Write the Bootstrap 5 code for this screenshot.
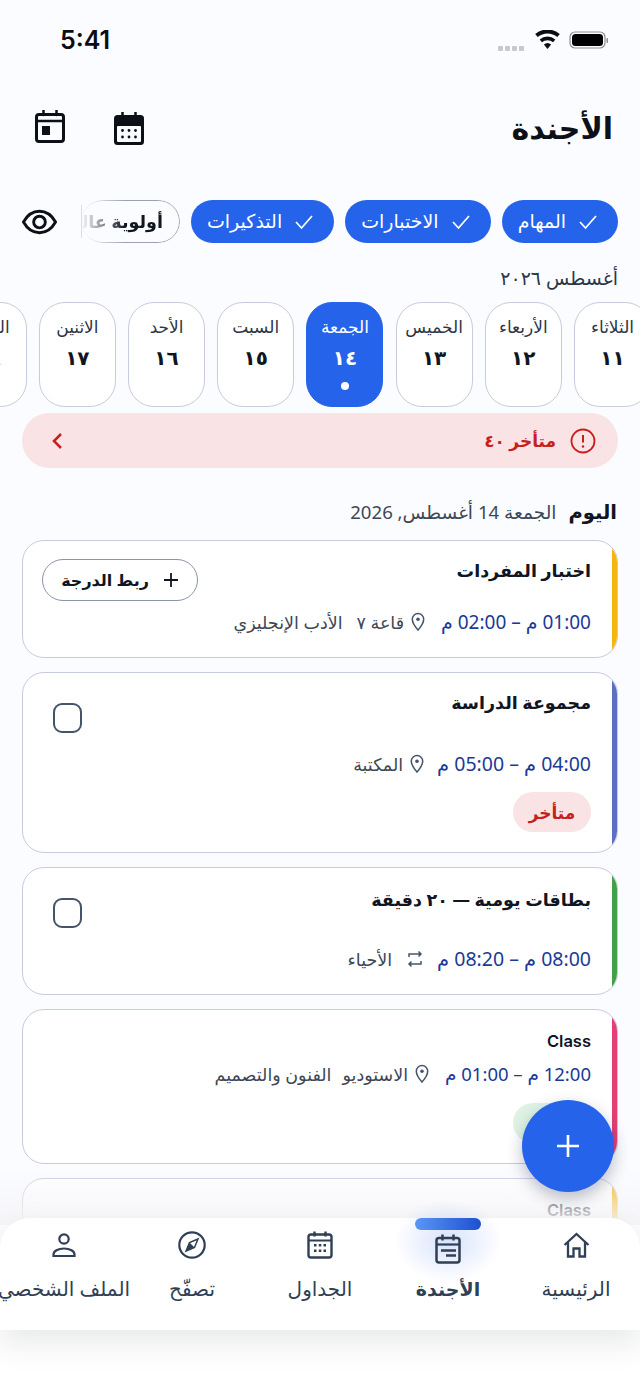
<!DOCTYPE html>
<html lang="ar" dir="rtl">
<head>
<meta charset="UTF-8">
<meta name="viewport" content="width=device-width, initial-scale=1.0">
<title>الأجندة</title>
<link href="https://cdn.jsdelivr.net/npm/bootstrap@5.3.0/dist/css/bootstrap.min.css" rel="stylesheet">
<style>
  html, body { height: 1385px; overflow: hidden; }
  body { background: #fbfcff; font-family: "Noto Sans", "DejaVu Sans", sans-serif; color: #10151f; }
  .phone { position: relative; height: 1385px; overflow: hidden; }

  .status-row { height: 82px; padding: 24px 31px 0 60px; direction: ltr; }
  .clock { font: 600 25px/32px Inter, sans-serif; color: #0b0d12; }
  .signal-row { gap: 2px; margin-top: 16px; margin-right: 2px; }
  .signal-dot { width: 5px; height: 5px; border-radius: 1px; background: #c9c9cc; }

  .head-row { height: 92px; padding: 0 27px 0 35px; }
  .page-title { font-size: 30px; font-weight: 700; margin: 0; color: #0d1117; }
  .head-icons { gap: 49px; }
  .ico-up { margin-top: -4px; }

  .filter-row { padding: 26px 22px 0 22px; height: 69px; }
  .chip-pill { height: 43px; border-radius: 22px; font-size: 19px; font-weight: 500; background: #2563eb; color: #fff; padding: 0 20px 0 16px; gap: 12px; white-space: nowrap; flex-shrink: 0; }
  .chip-wrap { position: relative; flex-shrink: 0; }
  .chip-wrap::after { content: ""; position: absolute; left: 0; top: 5px; bottom: 5px; width: 1.500px; background: #dcdde3; }
  .chip-fade { width: 99px; height: 43px; border: 1.5px solid #9aa3b5; border-radius: 22px; overflow: hidden; white-space: nowrap; font-size: 17.500px; font-weight: 600; padding: 0 16px 0 0; line-height: 40px; -webkit-mask-image: linear-gradient(to left, #000 55%, transparent 100%); mask-image: linear-gradient(to left, #000 55%, transparent 100%); }

  .month-label { padding: 22px 22px 0 0; font-size: 19px; font-weight: 500; color: #2b3648; height: 59px; line-height: 26px; }

  .day-strip { gap: 12.200px; margin-right: -11px; height: 105px; }
  .day-tile { width: 77px; height: 105px; flex-shrink: 0; border: 1.5px solid #c8cbdc; border-radius: 26px; background: #fff; text-align: center; padding-top: 13px; }
  .day-name { font-size: 17px; font-weight: 500; line-height: 22px; color: #2b3648; white-space: nowrap; }
  .day-num { font-size: 20px; font-weight: 700; line-height: 28px; margin-top: 6px; color: #10151f; }
  .day-tile.is-today { background: #2563eb; border-color: #2563eb; }
  .day-tile.is-today .day-name, .day-tile.is-today .day-num { color: #fff; }
  .today-dot { width: 8px; height: 8px; border-radius: 50%; background: #fff; margin: 10px auto 0; }

  .late-bar { margin: 6px 22px 0; height: 55px; border-radius: 28px; background: #f9e3e4; color: #c81e1e; padding: 0 22px 0 28px; font-size: 17px; font-weight: 700; }
  .late-label { gap: 14px; }

  .date-row { padding: 16px 23px 0 0; height: 72px; gap: 12px; }
  .date-today { font-size: 19.500px; font-weight: 700; }
  .date-full { font-size: 18.600px; color: #3d4756; }

  .agenda-card { margin: 0 22px 14px; border: 1.5px solid #c8cbdc; border-radius: 22px; background: #fff; overflow: hidden; flex-direction: row; }
  .side-stripe { width: 5px; flex-shrink: 0; }
  .card-inner { flex-grow: 1; padding: 0 21px 0 19px; }
  .card-title-text { font-size: 17.500px; line-height: 22px; font-weight: 700; color: #10151f; }
  .h-cards .card-title-text { margin-top: 2px; }
  .meta-row { gap: 16px; font-size: 17.500px; color: #3d4756; white-space: nowrap; }
  .meta-row.is-tight { gap: 13px; }
  .time-text { font-size: 19px; color: #1a3a96; }
  .is-tight .time-text { font-size: 19.500px; }
  .class-meta .time-text { font-size: 18.500px; }
  .meta-place { gap: 7px; }
  .gap-wide { gap: 14px; }
  .place-note { margin-right: -2px; }
  .class-note { margin-right: -5px; }
  .link-grade { width: 156px; height: 42px; border: 1.5px solid #8b95aa; border-radius: 21px; font-size: 16px; font-weight: 700; background: #fff; color: #10151f; padding: 0; gap: 14px; }
  .tick-box { width: 29px; height: 30px; border: 2.5px solid #46546b; border-radius: 9px; margin-left: 11px; margin-top: 12px; }
  .state-tag { height: 40px; width: 78px; border-radius: 20px; font-size: 17px; font-weight: 600; }
  .tag-late { background: #f9e3e4; color: #c81e1e; }
  .tag-green { background: #dff3e5; }

  .h-exam { height: 118px; }
  .h-study { height: 181px; }
  .h-cards { height: 128px; }
  .h-class { height: 155px; }
  .h-next { height: 120px; }
  .class-title { font-size: 16.500px; line-height: 25px; font-weight: 600; font-family: Inter, "Noto Sans", sans-serif; padding-top: 19px; }

  .fab-add { position: absolute; left: 522px; top: 1100px; width: 92px; height: 92px; border-radius: 50%; background: #2563eb; box-shadow: 0 6px 16px rgba(30, 40, 70, .3); border: 0; padding: 0; }
  .fade-veil { position: absolute; left: 0; right: 0; top: 1165px; height: 60px; background: linear-gradient(to bottom, rgba(250, 250, 252, 0), rgba(245, 245, 248, .95)); }

  .tab-bar { position: absolute; left: 0; right: 0; top: 1218px; height: 112px; background: #fff; border-radius: 30px 30px 0 0; box-shadow: 0 14px 30px rgba(40, 45, 60, .1); }
  .tab-cell { width: 128px; flex-shrink: 0; text-align: center; position: relative; color: #2f3f55; font-size: 20px; white-space: nowrap; }
  .tab-ico { height: 54px; display: flex; align-items: center; justify-content: center; }
  .tab-name { line-height: 28px; margin-top: 3px; display: block; margin-inline: -20px; }
  .tab-cell.is-active { font-weight: 700; font-size: 19px; }
  .tab-pip { position: absolute; top: 0; left: 31px; width: 66px; height: 12px; border-radius: 6px; background: linear-gradient(to right, #5b96f5, #1d50d0); }
  .tab-glow { position: absolute; top: -20px; left: 8px; width: 112px; height: 86px; background: radial-gradient(ellipse at center, rgba(60, 110, 240, .2), rgba(60, 110, 240, 0) 68%); }
  .ico-drop { padding-top: 8px; }
  .page-foot { position: absolute; left: 0; right: 0; top: 1330px; height: 55px; background: #fff; }
</style>
</head>
<body>
<div class="phone">

  <div class="status-row d-flex justify-content-between">
    <span class="clock">5:41</span>
    <div class="d-flex align-items-center gap-2" style="height:32px">
      <div class="signal-row d-flex"><span class="signal-dot"></span><span class="signal-dot"></span><span class="signal-dot"></span><span class="signal-dot"></span></div>
      <svg width="27" height="20" viewBox="0 0 27 20"><path d="M13.5 19l-3.6-4.4a5.6 5.6 0 0 1 7.2 0zM7.9 12.2L5.700 9.500a12 12 0 0 1 15.600 0l-2.200 2.700a8.600 8.600 0 0 0-11.200 0zM3.700 7L1.200 4a19 19 0 0 1 24.600 0l-2.500 3a15.200 15.200 0 0 0-19.600 0z" fill="#0b0d12"/></svg>
      <svg width="40" height="20" viewBox="0 0 40 20"><rect x="1" y="2" width="35" height="16" rx="5" fill="none" stroke="#8d8d90" stroke-width="1.200"/><rect x="3" y="4" width="31" height="12" rx="3.500" fill="#000"/><rect x="37.500" y="8" width="1.500" height="5" rx=".7" fill="#8d8d90"/></svg>
    </div>
  </div>

  <div class="head-row d-flex justify-content-between align-items-center">
    <h1 class="page-title">الأجندة</h1>
    <div class="head-icons d-flex align-items-center">
      <svg width="30" height="33" viewBox="0 0 30 33"><rect x="0" y="3" width="30" height="30" rx="3.500" fill="#0d1117"/><path d="M8.500 0v5M21.500 0v5" stroke="#0d1117" stroke-width="2.500" stroke-linecap="round"/><rect x="3" y="14" width="24" height="16" rx="1" fill="#fbfcff"/><g fill="#0d1117"><circle cx="8.500" cy="18.500" r="1.400"/><circle cx="15" cy="18.500" r="1.400"/><circle cx="21.500" cy="18.500" r="1.400"/><circle cx="8.500" cy="25" r="1.400"/><circle cx="15" cy="25" r="1.400"/><circle cx="21.500" cy="25" r="1.400"/></g></svg>
      <svg class="ico-up" width="30" height="33" viewBox="0 0 30 33"><rect x="1.500" y="4.500" width="27" height="27" rx="2.500" fill="none" stroke="#0d1117" stroke-width="3"/><path d="M8.500 0v5M21.500 0v5" stroke="#0d1117" stroke-width="2.500" stroke-linecap="round"/><path d="M2 11h26" stroke="#0d1117" stroke-width="2.500"/><rect x="7" y="16" width="8" height="9" fill="#0d1117"/></svg>
    </div>
  </div>

  <div class="filter-row d-flex align-items-start justify-content-between">
    <div class="d-flex" style="gap:11px">
      <div class="chip-pill d-flex align-items-center"><svg width="20" height="16" viewBox="0 0 20 16"><path d="M2 8l5.500 6L18 2" fill="none" stroke="#fff" stroke-width="1.800"/></svg><span>المهام</span></div>
      <div class="chip-pill d-flex align-items-center"><svg width="20" height="16" viewBox="0 0 20 16"><path d="M2 8l5.500 6L18 2" fill="none" stroke="#fff" stroke-width="1.800"/></svg><span>الاختبارات</span></div>
      <div class="chip-pill d-flex align-items-center"><svg width="20" height="16" viewBox="0 0 20 16"><path d="M2 8l5.500 6L18 2" fill="none" stroke="#fff" stroke-width="1.800"/></svg><span>التذكيرات</span></div>
      <div class="chip-wrap"><div class="chip-fade">أولوية عالية</div></div>
    </div>
    <svg class="mt-1" width="35" height="36" viewBox="0 0 36 36"><path d="M1.500 18C6 10 11.500 7 18 7s12 3 16.500 11C30 26 24.500 29 18 29S6 26 1.500 18z" fill="none" stroke="#0d1117" stroke-width="3"/><circle cx="18" cy="18" r="6" fill="none" stroke="#0d1117" stroke-width="3"/></svg>
  </div>

  <div class="month-label">أغسطس ٢٠٢٦</div>

  <div class="day-strip d-flex">
    <div class="day-tile"><div class="day-name">الثلاثاء</div><div class="day-num">١١</div></div>
    <div class="day-tile"><div class="day-name">الأربعاء</div><div class="day-num">١٢</div></div>
    <div class="day-tile"><div class="day-name">الخميس</div><div class="day-num">١٣</div></div>
    <div class="day-tile is-today"><div class="day-name">الجمعة</div><div class="day-num">١٤</div><div class="today-dot"></div></div>
    <div class="day-tile"><div class="day-name">السبت</div><div class="day-num">١٥</div></div>
    <div class="day-tile"><div class="day-name">الأحد</div><div class="day-num">١٦</div></div>
    <div class="day-tile"><div class="day-name">الاثنين</div><div class="day-num">١٧</div></div>
    <div class="day-tile"><div class="day-name">الثلاثاء</div><div class="day-num">١٨</div></div>
  </div>

  <div class="late-bar d-flex align-items-center justify-content-between">
    <div class="late-label d-flex align-items-center">
      <svg width="26" height="26" viewBox="0 0 26 26"><circle cx="13" cy="13" r="11.500" fill="none" stroke="#c81e1e" stroke-width="1.800"/><path d="M13 7v7.500" stroke="#c81e1e" stroke-width="2"/><circle cx="13" cy="18.500" r="1.200" fill="#c81e1e"/></svg>
      <span>متأخر ٤٠</span>
    </div>
    <svg width="14" height="18" viewBox="0 0 14 18"><path d="M11 2L4 9l7 7" fill="none" stroke="#c81e1e" stroke-width="2.500"/></svg>
  </div>

  <div class="date-row d-flex align-items-center">
    <span class="date-today">اليوم</span>
    <span class="date-full">الجمعة 14 أغسطس, 2026</span>
  </div>

  <div class="card agenda-card h-exam">
    <div class="side-stripe" style="background:#f5b50e"></div>
    <div class="card-inner">
      <div class="d-flex justify-content-between align-items-start" style="padding-top:18px">
        <span class="card-title-text">اختبار المفردات</span>
        <button class="btn link-grade d-flex align-items-center justify-content-center" type="button"><svg width="16" height="16" viewBox="0 0 16 16"><path d="M8 1v14M1 8h14" stroke="#10151f" stroke-width="1.800"/></svg>ربط الدرجة</button>
      </div>
      <div class="meta-row d-flex align-items-center" style="margin-top:7px">
        <span class="time-text">01:00 م – 02:00 م</span>
        <span class="meta-place d-flex align-items-center"><svg width="14" height="20" viewBox="0 0 14 20"><path d="M7 1.500a5.700 5.700 0 0 1 5.700 5.700C12.700 11.500 7 18 7 18S1.300 11.500 1.300 7.200A5.700 5.700 0 0 1 7 1.500z" fill="none" stroke="#46546b" stroke-width="1.500"/><circle cx="7" cy="7.200" r="1.800" fill="#46546b"/></svg>قاعة ٧</span>
        <span class="place-note">الأدب الإنجليزي</span>
      </div>
    </div>
  </div>

  <div class="card agenda-card h-study">
    <div class="side-stripe" style="background:#5c6fc4"></div>
    <div class="card-inner">
      <div class="d-flex justify-content-between align-items-start" style="padding-top:18px">
        <span class="card-title-text">مجموعة الدراسة</span>
        <span class="tick-box"></span>
      </div>
      <div class="meta-row is-tight d-flex align-items-center" style="margin-top:16px">
        <span class="time-text">04:00 م – 05:00 م</span>
        <span class="meta-place d-flex align-items-center"><svg width="14" height="20" viewBox="0 0 14 20"><path d="M7 1.500a5.700 5.700 0 0 1 5.700 5.700C12.700 11.500 7 18 7 18S1.300 11.500 1.300 7.200A5.700 5.700 0 0 1 7 1.500z" fill="none" stroke="#46546b" stroke-width="1.500"/><circle cx="7" cy="7.200" r="1.800" fill="#46546b"/></svg>المكتبة</span>
      </div>
      <div class="state-tag tag-late d-flex align-items-center justify-content-center" style="margin-top:14px">متأخر</div>
    </div>
  </div>

  <div class="card agenda-card h-cards">
    <div class="side-stripe" style="background:#43a04a"></div>
    <div class="card-inner">
      <div class="d-flex justify-content-between align-items-start" style="padding-top:18px">
        <span class="card-title-text">بطاقات يومية — ٢٠ دقيقة</span>
        <span class="tick-box"></span>
      </div>
      <div class="meta-row is-tight d-flex align-items-center" style="margin-top:16px">
        <span class="time-text">08:00 م – 08:20 م</span>
        <span class="meta-place gap-wide d-flex align-items-center"><svg width="18" height="18" viewBox="0 0 18 18"><path d="M3 7V4h12M12.500 1.500L15 4l-2.500 2.500M15 11v3H3M5.500 11.500L3 14l2.500 2.500" fill="none" stroke="#46546b" stroke-width="1.500"/></svg>الأحياء</span>
      </div>
    </div>
  </div>

  <div class="card agenda-card h-class">
    <div class="side-stripe" style="background:#e53e74"></div>
    <div class="card-inner">
      <div class="class-title">Class</div>
      <div class="meta-row class-meta d-flex align-items-center" style="margin-top:6px">
        <span class="time-text">12:00 م – 01:00 م</span>
        <span class="meta-place d-flex align-items-center"><svg width="14" height="20" viewBox="0 0 14 20"><path d="M7 1.500a5.700 5.700 0 0 1 5.700 5.700C12.700 11.500 7 18 7 18S1.300 11.500 1.300 7.200A5.700 5.700 0 0 1 7 1.500z" fill="none" stroke="#46546b" stroke-width="1.500"/><circle cx="7" cy="7.200" r="1.800" fill="#46546b"/></svg>الاستوديو</span>
        <span class="class-note">الفنون والتصميم</span>
      </div>
      <div class="state-tag tag-green" style="margin-top:15px"></div>
    </div>
  </div>

  <div class="card agenda-card h-next">
    <div class="side-stripe" style="background:#f5b50e"></div>
    <div class="card-inner">
      <div class="class-title">Class</div>
    </div>
  </div>

  <div class="fade-veil"></div>

  <button class="fab-add d-flex align-items-center justify-content-center" type="button" aria-label="إضافة"><svg width="26" height="26" viewBox="0 0 26 26"><path d="M13 2v22M2 13h22" stroke="#fff" stroke-width="2.600"/></svg></button>

  <div class="page-foot"></div>
  <nav class="tab-bar d-flex">
    <div class="tab-cell"><div class="tab-ico"><svg width="27" height="26" viewBox="0 0 27 26"><path d="M1.500 13L13.500 2l12 11M5 10.500V24.500h5.500v-8h6v8H22V10.500" fill="none" stroke="#2f3f55" stroke-width="2.300"/></svg></div><span class="tab-name">الرئيسية</span></div>
    <div class="tab-cell is-active"><div class="tab-glow"></div><div class="tab-pip"></div><div class="tab-ico ico-drop position-relative"><svg width="26" height="30" viewBox="0 0 26 30"><rect x="1.500" y="4" width="23" height="24.500" rx="2.500" fill="none" stroke="#2f3f55" stroke-width="2.500"/><path d="M7.500 .5v6M18.500 .5v6" stroke="#2f3f55" stroke-width="2.500"/><path d="M1.500 10.500h23" stroke="#2f3f55" stroke-width="2.200"/><path d="M6 16.500h15M11 21.500h10" stroke="#2f3f55" stroke-width="2.300"/></svg></div><span class="tab-name position-relative">الأجندة</span></div>
    <div class="tab-cell"><div class="tab-ico"><svg width="26" height="28" viewBox="0 0 26 28"><rect x="1.500" y="3.500" width="23" height="23" rx="2.500" fill="none" stroke="#2f3f55" stroke-width="2.400"/><path d="M7.500 .5v5M18.500 .5v5" stroke="#2f3f55" stroke-width="2.400"/><path d="M1.500 9.500h23" stroke="#2f3f55" stroke-width="2"/><g fill="#2f3f55"><rect x="7" y="13" width="2.500" height="2.500"/><rect x="11.800" y="13" width="2.500" height="2.500"/><rect x="16.500" y="13" width="2.500" height="2.500"/><rect x="7" y="18.500" width="2.500" height="2.500"/><rect x="11.800" y="18.500" width="2.500" height="2.500"/><rect x="16.500" y="18.500" width="2.500" height="2.500"/></g></svg></div><span class="tab-name">الجداول</span></div>
    <div class="tab-cell"><div class="tab-ico"><svg width="28" height="28" viewBox="0 0 28 28"><circle cx="14" cy="14" r="12.700" fill="none" stroke="#2f3f55" stroke-width="2.200"/><path d="M20 8l-3.500 8.500L8 20l3.500-8.500z" fill="none" stroke="#2f3f55" stroke-width="1.500"/><path d="M8 20l3.500-8.500 5 5z" fill="#2f3f55"/></svg></div><span class="tab-name">تصفّح</span></div>
    <div class="tab-cell"><div class="tab-ico"><svg width="24" height="24" viewBox="0 0 24 24"><circle cx="12" cy="6" r="4.700" fill="none" stroke="#2f3f55" stroke-width="2.200"/><path d="M1.500 23v-1.500c0-3.500 4.500-6 10.500-6s10.500 2.500 10.500 6V23z" fill="none" stroke="#2f3f55" stroke-width="2.200"/></svg></div><span class="tab-name">الملف الشخصي</span></div>
  </nav>
</div>
<script src="https://cdn.jsdelivr.net/npm/bootstrap@5.3.0/dist/js/bootstrap.bundle.min.js"></script>
</body>
</html>
